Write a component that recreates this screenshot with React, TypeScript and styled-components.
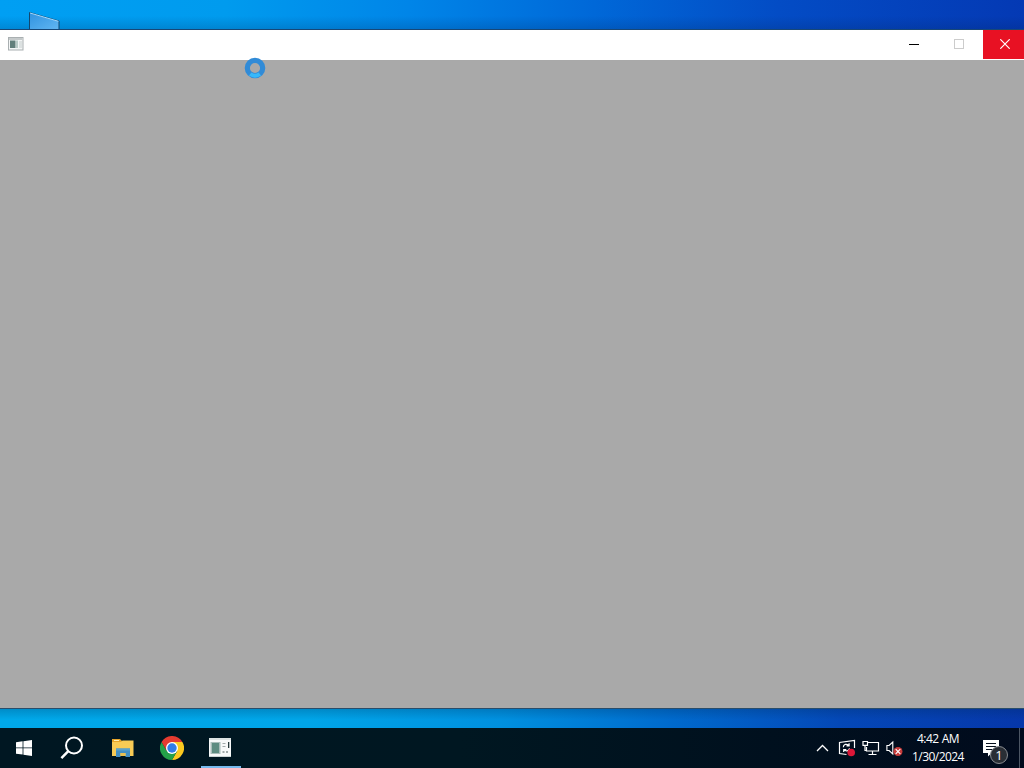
import React from "react";
import styled, { createGlobalStyle } from "styled-components";

interface TaskButtonProps {
  $active?: boolean;
}

interface CaptionButtonProps {
  $close?: boolean;
}

const App: React.FC = () => {
  return (
    <Desktop>
      <GlobalStyle />
      <TopStrip>
        <DesktopIcon />
      </TopStrip>
      <Window>
        <TitleBar>
          <WindowIcon />
          <CaptionButtons>
            <CaptionButton>
              <svg width="10" height="10" shapeRendering="crispEdges">
                <path d="M0 5h10v1H0z" fill="#000" />
              </svg>
            </CaptionButton>
            <CaptionButton>
              <svg width="10" height="10">
                <rect x=".5" y=".5" width="9" height="9" fill="none" stroke="#ccc" />
              </svg>
            </CaptionButton>
            <CaptionButton $close>
              <svg width="10" height="10">
                <path d="M.3 .3l9.4 9.4M9.7 .3L.3 9.7" stroke="#fff" strokeWidth="1.2" />
              </svg>
            </CaptionButton>
          </CaptionButtons>
        </TitleBar>
        <Client />
      </Window>
      <BottomStrip />
      <Taskbar>
        <TaskButtons>
          <TaskButton>
            <StartIcon />
          </TaskButton>
          <TaskButton>
            <SearchIcon />
          </TaskButton>
          <TaskButton>
            <FolderIcon />
          </TaskButton>
          <TaskButton>
            <ChromeIcon />
          </TaskButton>
          <TaskButton $active>
            <ProgramIcon />
          </TaskButton>
        </TaskButtons>
        <Tray>
          <TrayIcons />
          <Clock>
            <span>4:42 AM</span>
            <span>1/30/2024</span>
          </Clock>
          <ActionCenter>
            <MessageIcon />
            <Badge>1</Badge>
          </ActionCenter>
          <ShowDesktop />
        </Tray>
      </Taskbar>
      <BusyCursor />
    </Desktop>
  );
};

const DesktopIcon = () => (
  <svg width="32" height="19" viewBox="0 0 32 19">
    <defs>
      <linearGradient id="glass" x1="0" y1="0" x2="1" y2="1">
        <stop offset="0" stopColor="#2f92e0" />
        <stop offset="1" stopColor="#62b7f2" />
      </linearGradient>
    </defs>
    <path d="M1.5 2.5L31 11v9H1.5z" fill="url(#glass)" />
    <path d="M1.5 19V2.5L31 11v8" fill="none" stroke="#12476f" strokeWidth="1" />
    <path d="M2 3L30.5 11.3" stroke="#a5dcff" strokeWidth="1" />
  </svg>
);

const WindowIcon = () => (
  <svg width="16" height="14" viewBox="0 0 16 14">
    <rect x=".5" y=".5" width="14.5" height="12.5" fill="#f3f5f5" stroke="#a9afb1" />
    <path d="M1 1h13.5v2H1z" fill="#c5cacb" />
    <rect x="2" y="3.5" width="5.5" height="7.5" fill="#627f7b" />
    <path d="M8 3.5h2V11H8z" fill="#b9cbc7" />
    <path d="M11 4h3v7h-3z" fill="#dce1e1" />
  </svg>
);

const StartIcon = () => (
  <svg width="16" height="16" viewBox="0 0 16 16">
    <path
      d="M0 2.2L6.6 1.3v6.2H0zM7.4 1.2L16 0v7.5H7.4zM0 8.3h6.6v6.3L0 13.7zM7.4 8.3H16V16l-8.6-1.3z"
      fill="#fff"
    />
  </svg>
);

const SearchIcon = () => (
  <svg width="24" height="24" viewBox="0 0 24 24" fill="none" stroke="#fff">
    <circle cx="14" cy="9.5" r="8" strokeWidth="2" />
    <path d="M8.3 15.2L1.4 22.2" strokeWidth="2.5" />
  </svg>
);

const FolderIcon = () => (
  <svg width="22" height="18" viewBox="0 0 22 18">
    <path d="M0 0h8l2 2h11v4H0z" fill="#e6a52a" />
    <path d="M0 3h9l1.5-1.5h11V17H0z" fill="#f8cb55" />
    <path d="M2 1h5v1H2z" fill="#fff0b5" />
    <path d="M4 9.5h14V18h-4.5v-4h-5v4H4z" fill="#438fc3" />
    <path d="M4 9.5h14v2H4z" fill="#5ba2cc" />
    <path d="M8.5 14h5v3h-5z" fill="#e9c052" />
  </svg>
);

const ChromeIcon = () => (
  <svg width="24" height="24" viewBox="0 0 24 24">
    <path d="M1.6 6A12 12 0 0 1 22.4 6L12 12z" fill="#e53b30" />
    <path d="M12 6h10.4A12 12 0 0 1 12 24l5.2-9z" fill="#fcc91f" />
    <path d="M1.6 6A12 12 0 0 0 12 24l5.2-9L12 12 6.8 15z" fill="#24a148" />
    <path d="M1.6 6l5.2 9L12 6z" fill="#e53b30" />
    <circle cx="12" cy="12" r="6" fill="#fff" />
    <circle cx="12" cy="12" r="4.7" fill="#327ce7" />
  </svg>
);

const ProgramIcon = () => (
  <svg width="22" height="19" viewBox="0 0 22 19">
    <path d="M0 0h22v19H0z" fill="#f7f9f9" />
    <path d="M0 0h22v2H0z" fill="#dce3e3" />
    <rect x="1.5" y="4" width="10" height="12" fill="#a9bdba" />
    <rect x="3" y="5" width="7" height="10" fill="#5d8c81" />
    <path d="M13.5 5h3v1h-3zM13.5 8h3v1h-3zM13.5 13h2v2h-2zM17 13h2v2h-2z" fill="#a1aaaa" />
    <path d="M19 4h1.3v6H19z" fill="#26383a" />
    <path d="M0 18h22v1H0z" fill="#cbd4d4" />
  </svg>
);

const TrayIcons = () => (
  <svg width="88" height="20" viewBox="0 0 88 20" fill="none" stroke="#fff">
    <path d="M1 13l5.5-5.5L12 13" strokeWidth="1.3" />
    {/* update status */}
    <path d="M38.5 10V2.5L23.5 4.5V15.5l7 1" strokeWidth="1.2" />
    <path d="M27.3 9.2c0-3 3.5-3.8 5.3-1.7M33.1 5.3v2.6h-2.6M33.5 10.3c-.4 2.8-3.7 3.5-5.4 1.4M27.7 14v-2.5h2.6" strokeWidth="1.2" />
    <circle cx="35.2" cy="14.5" r="3.8" fill="#dc1738" stroke="none" />
    {/* wired network */}
    <path d="M52 4.5h10.5v8.5H50.5V9M56.5 13v3.5M52.5 16.5h8" strokeWidth="1.2" />
    <path d="M47 3.5h4.5v3.8H47zM49 7.3v5.2h1.5" strokeWidth="1.2" />
    {/* muted speaker */}
    <path d="M70.9 7.5h2.2l3.7-3.5v12l-3.7-3.5h-2.2z" strokeWidth="1.1" />
    <circle cx="82" cy="13.5" r="4.5" fill="#c83b3a" stroke="none" />
    <path d="M79.7 11.2l4.6 4.6M84.3 11.2l-4.6 4.6" strokeWidth="1.2" />
  </svg>
);

const MessageIcon = () => (
  <svg width="17" height="17" viewBox="0 0 17 17">
    <path d="M0 0h16v13H8.5L5 16.5V13H0z" fill="#fff" />
    <path d="M3 3.5h10M3 6.5h10M3 9.5h7" stroke="#07111e" strokeWidth="1.1" />
  </svg>
);

const BusyCursor = () => (
  <Cursor width="22" height="22" viewBox="0 0 22 22">
    <circle cx="11" cy="11" r="7.7" fill="none" stroke="#318bd7" strokeWidth="5.2" />
    <path d="M6.2 17a7.7 7.7 0 0 0 9.6 0" fill="none" stroke="#36b8fa" strokeWidth="4" />
  </Cursor>
);

const GlobalStyle = createGlobalStyle`
  * {
    box-sizing: border-box;
  }
  body {
    margin: 0;
    overflow: hidden;
  }
  svg {
    display: block;
    flex-shrink: 0;
  }
`;
const Desktop = styled.div`
  position: relative;
  display: flex;
  flex-direction: column;
  width: 1024px;
  height: 768px;
  font-family: "Open Sans", "Noto Sans", sans-serif;
`;
const TopStrip = styled.div`
  height: 29px;
  padding: 10px 0 0 28px;
  background: linear-gradient(transparent 55%, rgba(0, 30, 80, 0.18)),
    linear-gradient(90deg, #009ff3 0%, #009bee 22%, #0085e8 40%, #0068d8 58%, #034cc5 76%, #0439b4 100%);
`;
const Window = styled.div`
  display: flex;
  flex-direction: column;
  height: 680px;
  border-top: 1px solid #174777;
  border-bottom: 1px solid #294d6b;
`;
const TitleBar = styled.div`
  display: flex;
  justify-content: space-between;
  height: 30px;
  padding: 7px 0 0 8px;
  background: #fff;
`;
const CaptionButtons = styled.div`
  display: flex;
  margin-top: -7px;
`;
const CaptionButton = styled.div<CaptionButtonProps>`
  display: flex;
  align-items: center;
  justify-content: center;
  width: ${({ $close }) => ($close ? "41px" : "45px")};
  height: 29px;
  margin-left: ${({ $close }) => ($close ? "2px" : "0")};
  padding-left: ${({ $close }) => ($close ? "3px" : "0")};
  padding-bottom: 1px;
  background: ${({ $close }) => ($close ? "#e81123" : "#fff")};
`;
const Client = styled.div`
  flex: 1;
  background: #a9a9a9;
`;
const BottomStrip = styled.div`
  height: 19px;
  background: linear-gradient(rgba(0, 40, 80, 0.22), transparent 55%),
    linear-gradient(90deg, #00a8e9 0%, #00a5e8 30%, #0090df 49%, #0069cc 66%, #0448b7 82%, #0637aa 100%);
`;
const Taskbar = styled.div`
  display: flex;
  justify-content: space-between;
  height: 40px;
  background: linear-gradient(90deg, #001722 0%, #001721 45%, #00101e 75%, #010b1d 100%);
`;
const TaskButtons = styled.div`
  display: flex;
`;
const TaskButton = styled.div<TaskButtonProps>`
  display: flex;
  align-items: center;
  justify-content: center;
  width: ${({ $active }) => ($active ? "40px" : "48px")};
  padding: ${({ $active }) => ($active ? "1px 2px 0 0" : "0")};
  border-bottom: ${({ $active }) => ($active ? "2px solid #76b9ed" : "0")};

  &:nth-child(3) {
    margin-left: 3px;
  }
  &:nth-child(4) {
    margin-left: 1px;
  }
  &:nth-child(5) {
    margin-left: 5px;
  }
`;
const Tray = styled.div`
  display: flex;
  align-items: center;
`;
const Clock = styled.div`
  display: flex;
  flex-direction: column;
  align-items: center;
  width: 67px;
  height: 40px;
  padding: 2px 0 0 1px;
  color: #fff;
  font-size: 12px;
  line-height: 18px;
  letter-spacing: -0.55px;
  word-spacing: 0.5px;
  white-space: nowrap;
`;
const ActionCenter = styled.div`
  position: relative;
  width: 48px;
  height: 40px;
  padding: 12px 0 0 12px;
`;
const Badge = styled.div`
  position: absolute;
  top: 18px;
  left: 19px;
  width: 18px;
  height: 18px;
  border: 1px solid #888c91;
  border-radius: 50%;
  background: #292e35;
  color: #fff;
  font-size: 13px;
  line-height: 16px;
  text-align: center;
`;
const ShowDesktop = styled.div`
  width: 5px;
  height: 40px;
  border-left: 1px solid #4c5664;
`;
const Cursor = styled.svg`
  position: absolute;
  top: 57px;
  left: 244px;
`;

export default App;
